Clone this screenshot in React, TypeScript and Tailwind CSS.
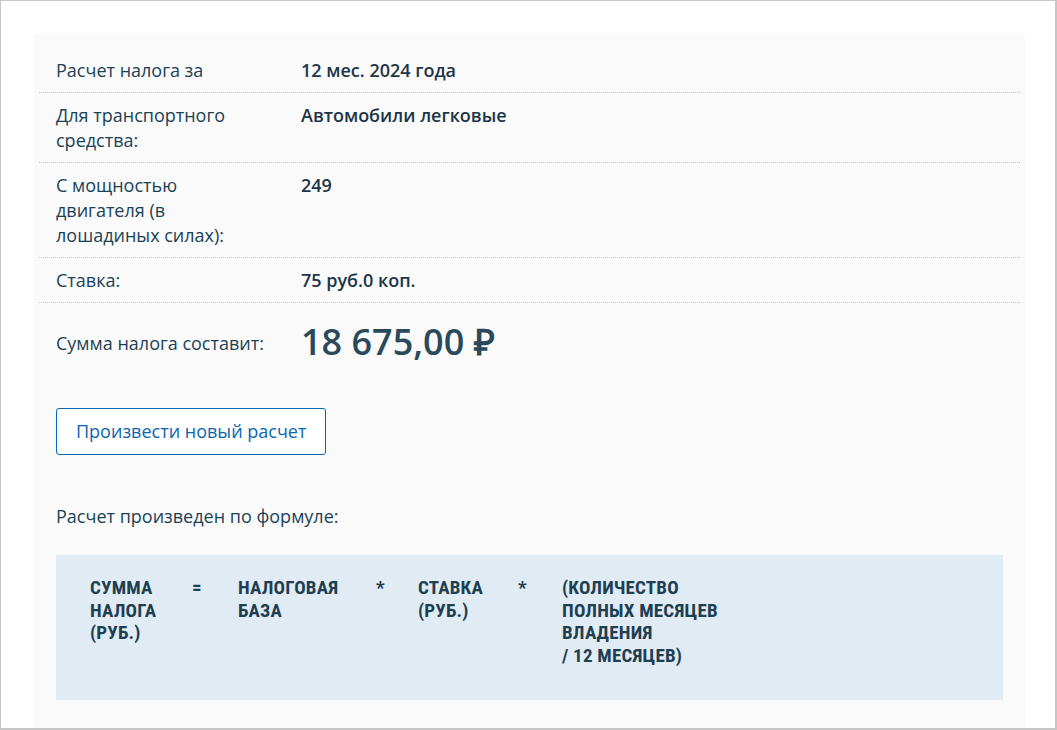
import React from "react";

const rows: { label: string; value: string }[] = [
  { label: "Расчет налога за", value: "12 мес. 2024 года" },
  { label: "Для транспортного средства:", value: "Автомобили легковые" },
  { label: "С мощностью двигателя (в лошадиных силах):", value: "249" },
  { label: "Ставка:", value: "75 руб.0 коп." },
];

const cond: React.CSSProperties = {
  fontFamily: '"Roboto", "Liberation Sans Narrow", sans-serif',
  fontStretch: "condensed",
};

export default function App() {
  return (
    <div
      className="w-[1057px] h-[730px] bg-white border-t border-l border-r-2 border-b-2 border-[#c6c6c6] overflow-hidden"
      style={{ fontFamily: '"Open Sans", sans-serif' }}
    >
      <div className="ml-[33px] mt-[33px] w-[991px] h-[700px] bg-[#fafafa] pt-[14px] px-[5px]">
        <div className="w-[981px]">
          {rows.map((r) => (
            <div
              key={r.label}
              className="flex border-b border-dotted border-[#c4c4c4] pt-[10px] pb-[9px] pl-[17px] text-[18px] leading-[25px]"
            >
              <div className="w-[245px] shrink-0 pr-[45px] text-[#1a4257]">{r.label}</div>
              <div className="font-semibold text-[#1c3547]">{r.value}</div>
            </div>
          ))}
          <div className="flex items-center pl-[17px] pt-[15px]">
            <div className="w-[245px] shrink-0 text-[18px] leading-[25px] text-[#1a4257] pt-[3px]">
              Сумма налога составит:
            </div>
            <div className="text-[36px] leading-[48px] font-[550] text-[#2a4a5c]">
              18 675,00 <span className="font-bold">₽</span>
            </div>
          </div>
        </div>
        <div className="pl-[17px] pt-[42px]">
          <button className="h-[47px] px-[19px] border border-[#0a66b0] rounded-[3px] bg-white text-[18px] text-[#0a66b0]">
            Произвести новый расчет
          </button>
          <div className="mt-[49px] text-[18px] leading-[25px] text-[#1a4257]">Расчет произведен по формуле:</div>
        </div>
        <div className="ml-[17px] mt-[26px] w-[947px] h-[145px] bg-[#e1ebf4] pl-[34px] pt-[22px]">
          <div
            className="flex text-[19px] leading-[22.5px] font-bold uppercase text-[#1e3e52] tracking-[0.2px]"
            style={cond}
          >
            <div className="w-[102px]">
              Сумма
              <br />
              налога
              <br />
              (руб.)
            </div>
            <div className="w-[46px]">=</div>
            <div className="w-[138px]">
              Налоговая
              <br />
              база
            </div>
            <div className="w-[42px]">*</div>
            <div className="w-[100px]">
              Ставка
              <br />
              (руб.)
            </div>
            <div className="w-[44px]">*</div>
            <div>
              (Количество
              <br />
              полных месяцев
              <br />
              владения
              <br />/ 12 месяцев)
            </div>
          </div>
        </div>
      </div>
    </div>
  );
}
